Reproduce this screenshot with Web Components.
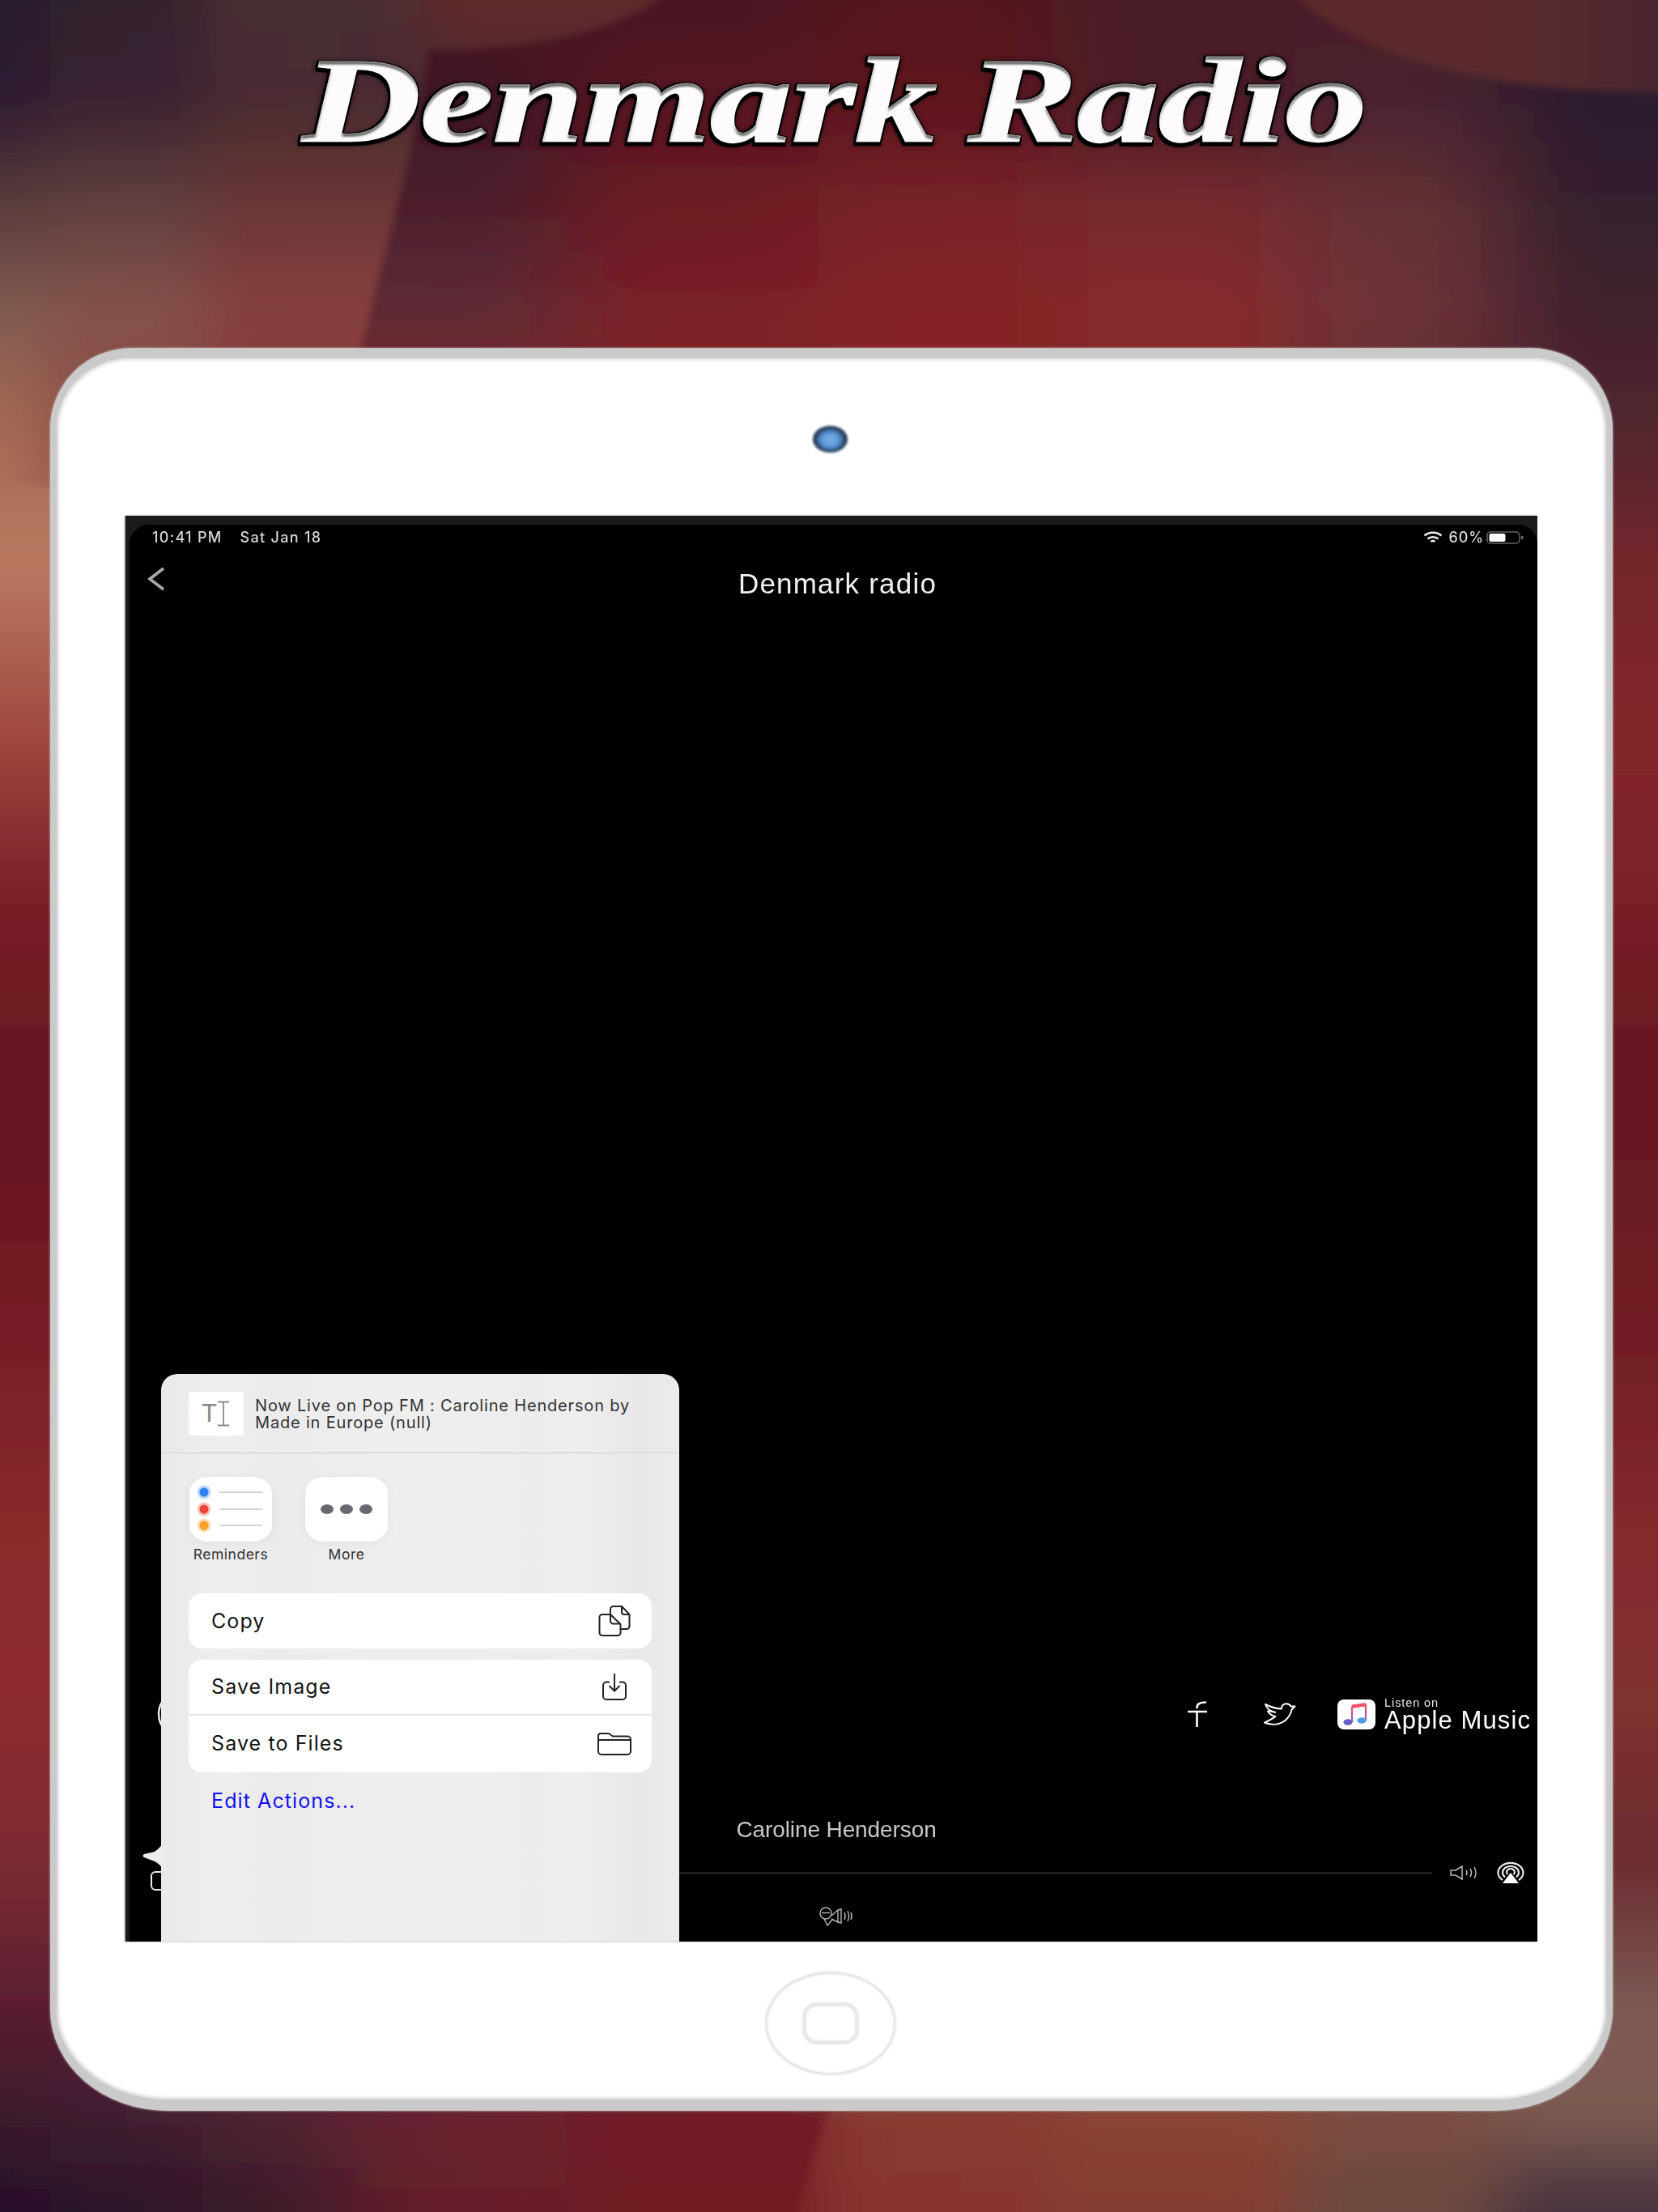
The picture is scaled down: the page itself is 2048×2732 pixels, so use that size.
<!DOCTYPE html>
<html lang="en"><head><meta charset="utf-8"><title>Denmark Radio</title>
<style>html,body{margin:0;padding:0;background:#5a1a22}</style></head>
<body>
<dk-page>
  <dk-title slot="title">Denmark Radio</dk-title>
  <dk-tablet slot="device">
    <dk-screen>
      <dk-status></dk-status>
      <dk-nav>Denmark radio</dk-nav>
      <dk-social></dk-social>
      <dk-player>Caroline Henderson</dk-player>
      <dk-sheet slot="overlay"></dk-sheet>
    </dk-screen>
  </dk-tablet>
</dk-page>
<script>
function def(name, html, init){
  customElements.define(name, class extends HTMLElement{
    constructor(){super();const r=this.attachShadow({mode:'open'});r.innerHTML=html;if(init)init(r,this);}
  });
}
def('dk-backdrop',`<style>:host{position:absolute;inset:0;display:block;overflow:hidden;z-index:0}svg{display:block}</style><svg id="s" width="2048" height="2732" viewBox="0 0 2048 2732"></svg>`,(r)=>{
  const ys=[0,125,255,380,520,700,900,1100,1300,1500,1700,1900,2100,2300,2480,2620,2715];
  const same=c=>Array(9).fill(c);
  const split=(a,b)=>[a,a,a,a,a,b,b,b,b];
  const base=[
   ['#251a2e','#33222f','#4a1420','#4a1420','#4a1420','#54141c','#4a1c26','#4a1c28','#2c1a2c'],
   ['#2e1c30','#3a2330','#3e1626','#3e1626','#561520','#5e161e','#4a1a28','#4a2430','#2a1a2e'],
   ['#5a3c3c','#614040','#4c1e2c','#4c1e2c','#6c1c24','#782228','#782c2e','#643034','#34202e'],
   ['#7f5a50','#84524a','#5e2c36','#5e2c36','#7a2026','#842428','#862c2c','#6e3438','#40202e'],
   ['#a46a54','#a46a54','#7a2026','#7a2026','#7a2026','#842428','#842428','#60282e','#50262e'],
   ['#ba7860','#ba7860','#7a2026','#7a2026','#7a2026','#74262c','#74262c','#74262c','#74262c'],
   ['#a04a40','#a04a40','#7a2026','#7a2026','#7a2026','#84262c','#84262c','#84262c','#84262c'],
   split('#7a2028','#7a2028'),same('#681820'),split('#6c1820','#6a1a22'),split('#7a2028','#742026'),
   split('#8a2a2c','#842a2c'),split('#8c2c2e','#80302e'),split('#7c2c32','#6c2c30'),split('#5a1e30','#7c5a54'),
   ['#3a1a2c','#3e2030','#502430','#6a2430','#741e26','#761e26','#761e26','#761e26','#761e26'],
   ['#28102a','#2e142a','#3c1c2c','#661f2a','#701c24','#721c24','#721c24','#721c24','#721c24']
  ];
  const bright={2620:['#8a3830','#8a4434','#7c4c40','#7a5a50'],2715:['#883630','#843e32','#6c4a40','#4a3440']};
  const axs=[-300,62,250,440,700,1010,1300,1600,1850,2350];
  function layer(id,xs,colsAt,blur){
    let d=`<filter id="f${id}" filterUnits="userSpaceOnUse" x="-300" y="-140" width="2650" height="3020"><feGaussianBlur stdDeviation="${blur} 24"/></filter>`,b='';
    const n=xs.length-1;
    for(let i=0;i<n;i++){
      d+=`<linearGradient id="${id}${i}" gradientUnits="userSpaceOnUse" x1="0" x2="0" y1="0" y2="2732">`+ys.map((y,k)=>`<stop offset="${y/2732}" stop-color="${colsAt(k)[i]}"/>`).join('')+'</linearGradient>';
      b+=`<rect x="${xs[i]}" y="-140" width="${xs[i+1]-xs[i]+1}" height="3020" fill="url(#${id}${i})"/>`;
    }
    return {d,g:`<g filter="url(#f${id})">${b}</g>`};
  }
  const A=layer('a',axs,k=>base[k],66);
  const leftTop=[['#251a2e','#33222f','#4a2d33','#622a2c'],['#2e1c30','#3a2330','#4a2c30','#4a2c30'],['#5a3c3c','#614040','#6a3636','#6a3636'],['#7f5a50','#84524a','#863f3e','#863f3e'],['#a46a54','#8c4c46','#863c3c','#863c3c'],['#ba7860','#8c4c46','#863c3c','#863c3c']];
  const B=layer('l',[-300,62,250,520,1100],k=>leftTop[Math.min(k,5)],40);
  const C=layer('r',[1000,1300,1600,1850,2350],k=>k>=15?bright[ys[k]]:base[k].slice(5),42);
  const defs=A.d+B.d+C.d+
   '<filter id="e" x="-5%" y="-5%" width="110%" height="110%"><feGaussianBlur stdDeviation="5"/></filter>'+
   '<mask id="ml" maskUnits="userSpaceOnUse" x="-50" y="-50" width="2200" height="2850"><path filter="url(#e)" fill="#fff" d="M-60 -40H850C810 30 680 62 530 62C510 200 470 330 444 440L444 600H-60Z"/></mask>'+
   '<mask id="mr" maskUnits="userSpaceOnUse" x="-50" y="-50" width="2200" height="2850"><path filter="url(#e)" fill="#fff" d="M1100 2400L1025 2600L968 2780H2150V2400Z"/></mask>'+
   '<linearGradient id="tr" x1="0" x2="1" y1="0" y2="0"><stop offset="0" stop-color="#5c2a2c"/><stop offset=".6" stop-color="#5a2a2e"/><stop offset="1" stop-color="#46262e"/></linearGradient>';
  r.getElementById('s').innerHTML='<defs>'+defs+'</defs>'+A.g+'<g mask="url(#ml)">'+B.g+'</g><g mask="url(#mr)">'+C.g+'</g>'+
   '<path filter="url(#e)" fill="url(#tr)" d="M1577 -40C1620 50 1800 118 2080 115V-40Z"/>';
});
def('dk-page',`<style>:host{display:flex;flex-direction:column;position:relative;width:2048px;height:2732px;overflow:hidden}
.head{position:relative;height:430px;z-index:1}.dev{position:relative;z-index:1;padding-left:62px}</style>
<dk-backdrop></dk-backdrop><div class="head"><slot name="title"></slot></div><div class="dev"><slot name="device"></slot></div>`);
def('dk-title',`<style>:host{display:block;text-align:center;padding-top:50px}
h1{display:inline-block;margin:0 0 0 14px;font:italic 700 148px/1 "Liberation Serif",serif;word-spacing:-8px;color:#fdfbfc;-webkit-text-stroke:2.4px #fdfbfc;transform:scaleX(1.36);transform-origin:center;filter:url(#bev);white-space:nowrap}</style>
<svg width="0" height="0" style="position:absolute"><filter id="bev" x="-5%" y="-10%" width="110%" height="125%" color-interpolation-filters="sRGB">
<feMorphology in="SourceAlpha" operator="dilate" radius="1.8 2.6" result="d"/><feOffset in="d" dx="-0.5" dy="1.5" result="d2"/><feFlood flood-color="#000"/><feComposite in2="d2" operator="in" result="edge"/>
<feGaussianBlur in="d2" stdDeviation="2.5" result="sb"/><feFlood flood-color="#000" flood-opacity=".45"/><feComposite in2="sb" operator="in" result="soft"/>
<feOffset in="SourceAlpha" dy="4" result="o"/><feComposite in="SourceAlpha" in2="o" operator="out" result="top"/><feGaussianBlur in="top" stdDeviation="1.2"/><feComposite in2="SourceAlpha" operator="in" result="tb"/><feFlood flood-color="#666"/><feComposite in2="tb" operator="in" result="shade"/>
<feMerge><feMergeNode in="soft"/><feMergeNode in="edge"/><feMergeNode in="SourceGraphic"/><feMergeNode in="shade"/></feMerge></filter></svg>
<h1><slot></slot></h1>`);
def('dk-tablet',`<style>:host{display:block;box-sizing:border-box;width:1930px;height:2177px;background:#fff;border:solid #cacaca;border-width:12px 8px 14px;border-radius:100px 100px 145px 145px/100px 100px 125px 125px;box-shadow:0 0 3px #c8c8c8,inset 0 0 4px 2px #d4d4d4}
.cam{height:195px;display:flex;align-items:center;justify-content:center;box-sizing:border-box;padding:5px 4px 0 0}
.lens{width:43px;height:33px;border-radius:50%;background:radial-gradient(ellipse at 50% 52%,#7db2ea 0,#5a96d8 36%,#24405f 62%,#16181f 82%,#666 100%);filter:blur(1.6px)}
.sc{padding:0 85px}
.homea{height:181px;display:flex;align-items:center;justify-content:center;padding:20px 3px 0 0;box-sizing:border-box}
.home{box-sizing:border-box;width:162px;height:128px;border-radius:50%;border:3px solid #e0e0e0;display:flex;align-items:center;justify-content:center;filter:blur(1px)}
.in{box-sizing:border-box;width:70px;height:52px;border-radius:18px;border:5px solid #e6e6e6}</style>
<div class="cam"><div class="lens"></div></div><div class="sc"><slot></slot></div><div class="homea"><div class="home"><div class="in"></div></div></div>`);
def('dk-screen',`<style>:host{display:block;width:1744px;height:1761px;background:#1a1a1a;box-shadow:-1px 0 2px #888;box-sizing:border-box;padding:11px 0 0 5px}
.inner{position:relative;height:100%;background:#000;border-radius:24px 24px 0 0;display:flex;flex-direction:column}</style>
<div class="inner"><slot></slot><slot name="overlay"></slot></div>`);
def('dk-status',`<style>:host{display:flex;align-items:center;height:32px;padding:0 17px 0 28px;font:500 18px/1 Inter,"Liberation Sans",sans-serif;letter-spacing:1.3px;color:#d8d8d8;filter:blur(.45px)}
.t{margin-right:22px}.sp{flex:1}svg{display:block}.p{margin:0 3px 0 7px;letter-spacing:.9px}</style>
<span class="t">10:41 PM</span><span>Sat Jan 18</span><span class="sp"></span>
<svg width="24" height="16" viewBox="0 0 24 16" fill="none" stroke="#eee" stroke-width="2.6"><path d="M1.5 5.5C7.5 .5 16.5 .5 22.5 5.5"/><path d="M5.5 9.5C9 6.5 15 6.5 18.5 9.5"/><path d="M9.5 13C11 11.8 13 11.8 14.5 13"/></svg>
<span class="p">60%</span>
<svg width="46" height="16" viewBox="0 0 46 16"><rect x="1" y="1" width="40" height="14" rx="4" fill="none" stroke="#666" stroke-width="1.5"/><rect x="3.5" y="3" width="20" height="10" rx="2" fill="#fff"/><rect x="43" y="6" width="2.5" height="4" rx="1" fill="#777"/></svg>`);
def('dk-nav',`<style>:host{display:grid;grid-template-columns:1fr auto 1fr;align-items:center;height:80px;padding-left:22px;margin-bottom:auto;filter:blur(.4px)}
svg{display:block;margin-top:-11px}span{font:400 35px/1 "Liberation Sans",sans-serif;letter-spacing:1.2px;color:#f0f0f0;margin-left:-12px}</style>
<svg width="22" height="30" viewBox="0 0 22 30" fill="none" stroke="#a8a8a8" stroke-width="3.800"><path d="M20 2L3 15l17 13"/></svg><span><slot></slot></span><i></i>`);
def('dk-social',`<style>:host{display:flex;align-items:center;height:60px;padding:0 8px 0 33px;color:#fff;filter:blur(.45px)}
svg{display:block;flex:none}.sp{flex:1}.brand{display:flex;flex-direction:column;margin-left:11px;font-family:"Liberation Sans",sans-serif}
.l{font-size:14.5px;line-height:15px;letter-spacing:.9px;color:#e8e8e8}.a{font-size:31px;line-height:28px;letter-spacing:1.1px;white-space:nowrap}</style>
<svg width="62" height="60" viewBox="0 0 62 60" fill="none" stroke="#eee" stroke-width="2.5"><circle cx="31" cy="30" r="28"/></svg>
<span class="sp"></span>
<svg width="24" height="32" viewBox="0 0 24 32" fill="none" stroke="#fff" stroke-width="2.6" stroke-linecap="round"><path d="M11.5 31V13"/><path d="M1 13H23"/><path d="M11.5 8C11.5 3.5 15 1.5 22 1.5"/></svg>
<svg style="margin-left:70px" width="40" height="28" viewBox="0 0 40 28" fill="none" stroke="#fff" stroke-width="2" stroke-linejoin="round"><path d="M38.5 4.5L33.500 4.500C31 0 25 .5 23 3.500C22 5 22 6 22 7.500C15 7.500 8 5 2 2C4 7 6 9 10 10.500L5 10.500C7 14 10 16 14.500 17C11 20 6 22 1 24.500C10 28 20 27.500 27 21.500C31 17.500 34 13 34.500 8.500Z"/><path d="M9 10.500L15 12"/></svg>
<svg style="margin-left:51px" width="47" height="37" viewBox="0 0 47 37"><defs><linearGradient id="m" x1="0" y1="0" x2="0" y2="1"><stop offset="0" stop-color="#f2506e"/><stop offset=".55" stop-color="#b85ea6"/><stop offset="1" stop-color="#5a7fd8"/></linearGradient></defs><rect width="47" height="37" rx="8" fill="#fff"/><path d="M18 28V9.500L35 7V26" fill="none" stroke="url(#m)" stroke-width="2.4"/><path d="M18 8.500L35 6" stroke="#f2506e" stroke-width="4"/><ellipse cx="13" cy="28" rx="5.500" ry="3.800" fill="#6a5fc8"/><ellipse cx="30" cy="26" rx="5.500" ry="3.800" fill="#4f9ee6"/></svg>
<div class="brand"><span class="l">Listen on</span><span class="a">Apple Music</span></div>`);
def('dk-player',`<style>:host{display:block;font-family:"Liberation Sans",sans-serif;color:#c8c8c8}
.name{height:40px;margin-top:93px;display:flex;align-items:center;justify-content:center;padding-left:7px;font-size:28px;font-weight:400;letter-spacing:-.1px;filter:blur(.5px)}
.prog{height:30px;margin-top:18px;display:flex;align-items:center;padding:0 15px 0 26px;filter:blur(.4px)}
.box{box-sizing:border-box;width:30px;height:24px;border:2px solid #eee;border-radius:6px;margin-top:20px;flex:none}
.line{flex:1;height:3px;background:#1e1e1e;margin:0 22px 0 0}
svg{display:block;flex:none}
.mic{height:40px;margin-top:19px;padding-bottom:11px;display:flex;justify-content:center;align-items:center;padding-left:7px;filter:blur(.4px)}</style>
<div class="name"><slot></slot></div>
<div class="prog"><span class="box"></span><span class="line"></span>
<svg width="36" height="18" viewBox="0 0 36 18" fill="none" stroke="#bbb" stroke-width="1.5"><path d="M1 6H7L15 1V17L7 12H1Z"/><path d="M20 6Q22 9 20 12M25 4Q28 9 25 14M30 2Q34 9 30 16"/></svg>
<svg style="margin-left:21px" width="36" height="28" viewBox="0 0 36 28" fill="none" stroke="#e8e8e8" stroke-width="2.2"><path d="M8 23A15.500 12 0 1 1 28 23"/><path d="M11 19.500A10 8 0 1 1 25 19.500"/><path d="M14.500 16A5 4 0 1 1 21.500 16"/><path d="M18 14L28 27H8Z" fill="#fff" stroke="none"/></svg></div>
<div class="mic"><svg width="42" height="24" viewBox="0 0 42 24" fill="none" stroke="#b8b8b8" stroke-width="1.4"><circle cx="8" cy="8" r="7"/><path d="M3 7.500H13"/><path d="M6 15L10 23L16 16"/><path d="M15 11L23 4V19L15 15"/><path d="M23 4L27 3V20L23 19"/><path d="M31 7Q33 11.500 31 16M35 5Q38 11.500 35 18M39 7Q41 11.500 39 16"/></svg></div>`);
def('dk-tile',`<style>:host{display:flex;flex-direction:column;align-items:center;width:102px;font:400 17.5px/1 Inter,"Liberation Sans",sans-serif;letter-spacing:.5px;color:#333}
.t{width:102px;height:80px;background:#fff;border-radius:24px/20px;box-shadow:0 2px 14px rgba(0,0,0,.05);display:flex;align-items:center;justify-content:center}
.l{margin-top:7px;height:16px;white-space:nowrap}</style><div class="t"><slot name="icon"></slot></div><div class="l"><slot></slot></div>`);
def('dk-action',`<style>:host{display:flex;align-items:center;justify-content:space-between;height:68px;padding:0 25px 0 28px;font:400 25px/1 Inter,"Liberation Sans",sans-serif;letter-spacing:1.1px;color:#151515}
.i{width:42px;display:flex;justify-content:center}</style><span><slot></slot></span><span class="i"><slot name="icon"></slot></span>`);
def('dk-sheet',`<style>:host{position:absolute;left:39px;top:1049px;bottom:0;width:640px;display:block;border-radius:20px 20px 0 0;box-sizing:border-box;
background:linear-gradient(90deg,#e9e9e9 0,#eeeeee 12%,#ebebeb 22%,#eee 40%,#eeeeee 60%,#ececec 72%,#eeeeee 80%,#e8e8e8 92%,#ebebeb 100%);font-family:Inter,"Liberation Sans",sans-serif;filter:blur(.45px)}
.arrow{position:absolute;left:-24px;top:578px;display:block}
.h{height:98px;box-sizing:border-box;border-bottom:1.5px solid #cfcfcf;display:flex;align-items:center;padding-left:34px;gap:14px}
.ti{position:relative;width:68px;height:54px;background:#fff;border-radius:4px;display:flex;align-items:center;padding-left:16px;box-sizing:border-box;font:300 31px/1 "Liberation Sans",sans-serif;color:#8a8a8a}
.txt{font-size:20px;line-height:21px;letter-spacing:.82px;color:#333;white-space:nowrap;padding-top:2px}
.apps{display:flex;gap:41px;padding:29px 0 0 35px;height:144px}
.card{margin:0 34px;background:#fff;border-radius:16px}
.c2{margin-top:14px}
.sep{height:1.500px;background:#e6e6e6}
.edit{margin-top:21px;padding-left:62px;font-size:25px;line-height:28px;letter-spacing:1.1px;color:#1212ee}</style>
<svg class="arrow" width="26" height="34" viewBox="0 0 26 34"><path d="M26 0C24 6 20 9 16 12L3 15C1 16 1 18 3 19L16 24C20 26 24 29 26 34Z" fill="#ececec"/></svg>
<div class="h"><div class="ti"><span>T</span><svg width="16" height="32" viewBox="0 0 16 32" fill="none" stroke="#8a8a8a" stroke-width="1.8"><path d="M1 1.500H15M8 1.500V30.500M1 30.500H15"/></svg></div>
<div class="txt">Now Live on Pop FM : Caroline Henderson by<br>Made in Europe (null)</div></div>
<div class="apps">
<dk-tile>Reminders<svg slot="icon" width="102" height="80" viewBox="0 0 102 80"><circle cx="18" cy="19" r="8.500" fill="#bcd6fa"/><circle cx="18" cy="19" r="5.500" fill="#2f7ff0"/><circle cx="18" cy="40" r="8.500" fill="#f8c4be"/><circle cx="18" cy="40" r="5.500" fill="#ee4438"/><circle cx="18" cy="60" r="8.500" fill="#fcdcae"/><circle cx="18" cy="60" r="5.500" fill="#f8a02a"/><path d="M37 19H90M37 40H90M37 60H90" stroke="#d2d2d2" stroke-width="1.800"/></svg></dk-tile>
<dk-tile>More<svg slot="icon" width="102" height="80" viewBox="0 0 102 80" fill="#686870"><ellipse cx="27" cy="40" rx="8" ry="6"/><ellipse cx="51" cy="40" rx="8" ry="6"/><ellipse cx="75" cy="40" rx="8" ry="6"/></svg></dk-tile>
</div>
<div class="card"><dk-action>Copy<svg slot="icon" width="40" height="38" viewBox="0 0 40 38" fill="none" stroke="#222" stroke-width="2" stroke-linejoin="round"><path d="M15 11H5A3.500 3.500 0 0 0 1.500 14.500V33.500A3.500 3.500 0 0 0 5 37H24A3.500 3.500 0 0 0 27.500 33.500V23L15 11V19A3.500 3.500 0 0 0 18.500 22.500H27.500"/><path d="M15 11V4.500A3.500 3.500 0 0 1 18.500 1H29L38.500 11V25.500A3.500 3.500 0 0 1 35 29H27.500"/><path d="M29 1V8A3 3 0 0 0 32 11H38.500"/></svg></dk-action></div>
<div class="card c2"><dk-action style="height:67px">Save Image<svg slot="icon" width="32" height="33" viewBox="0 0 32 33" fill="none" stroke="#222" stroke-width="2"><path d="M10 10.500H6A4 4 0 0 0 2 14.500V28A4 4 0 0 0 6 32H26A4 4 0 0 0 30 28V14.500A4 4 0 0 0 26 10.500H22"/><path d="M16 0V21M9.500 15L16 21.500L22.500 15"/></svg></dk-action><div class="sep"></div><dk-action style="height:70px">Save to Files<svg slot="icon" width="42" height="28" viewBox="0 0 42 28" fill="none" stroke="#222" stroke-width="2"><path d="M1 7V4A3 3 0 0 1 4 1H14L19 4.500H37A4 4 0 0 1 41 8.500V23A4 4 0 0 1 37 27H5A4 4 0 0 1 1 23Z"/><path d="M1 9H41"/></svg></dk-action></div>
<div class="edit">Edit Actions...</div>`);
</script>
</body></html>
